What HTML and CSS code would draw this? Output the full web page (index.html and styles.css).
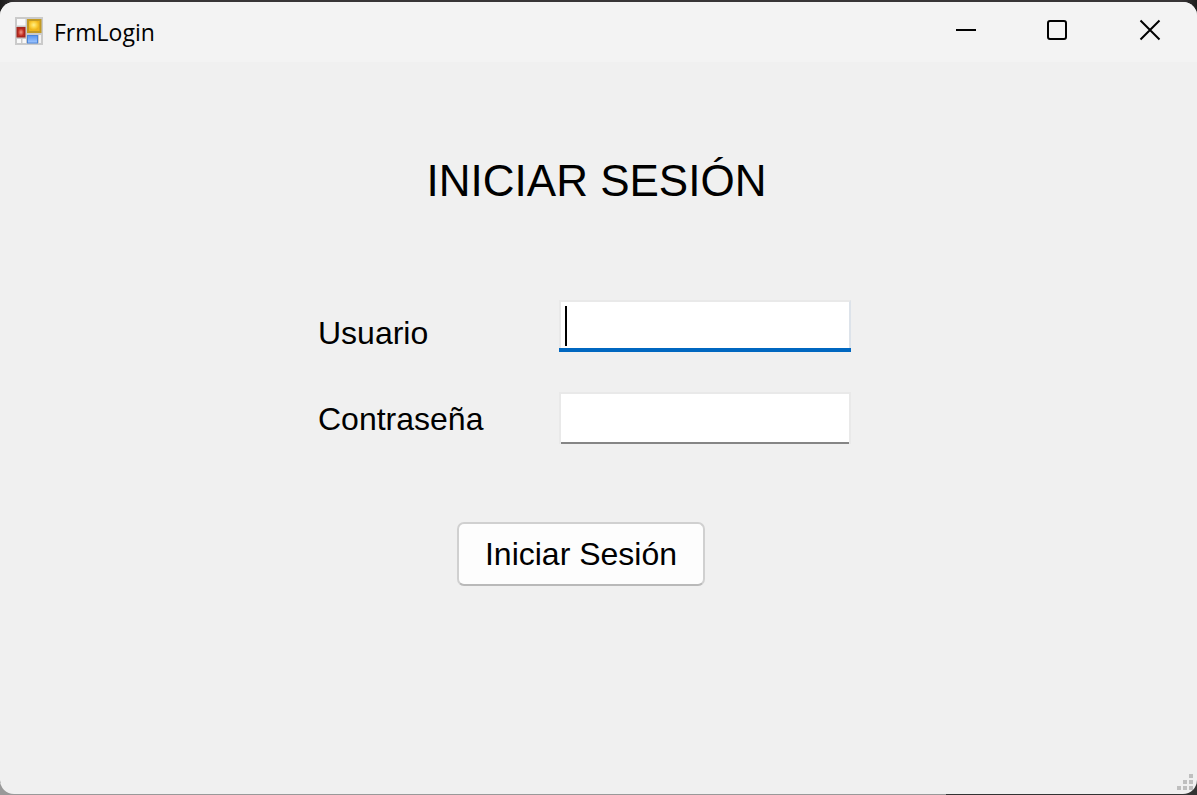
FILE: index.html
```html
<!DOCTYPE html>
<html lang="es">
<head>
<meta charset="utf-8">
<meta name="viewport" content="width=device-width, initial-scale=1">
<title>FrmLogin</title>
<link rel="stylesheet" href="styles.css">
</head>
<body>
<div class="window">
  <header class="titlebar">
    <svg class="app-icon" viewBox="0 0 28 28" aria-hidden="true">
      <defs>
        <radialGradient id="gold" cx=".45" cy=".4"><stop offset="0" stop-color="#fff08a"/><stop offset=".6" stop-color="#fbd03c"/><stop offset="1" stop-color="#efb51c"/></radialGradient>
        <radialGradient id="red"><stop offset="0" stop-color="#f29a8a"/><stop offset="1" stop-color="#c02a1e"/></radialGradient>
        <linearGradient id="blue" x2="0" y2="1"><stop offset="0" stop-color="#5b96ee"/><stop offset="1" stop-color="#9cc4ff"/></linearGradient>
      </defs>
      <rect width="28" height="28" fill="#cacaca"/>
      <rect x="2" y="2" width="8.500" height="6.500" fill="#fafafa"/>
      <rect x="2" y="22" width="4" height="4" fill="#f8f8f8"/>
      <rect x="7.500" y="22" width="3.500" height="4" fill="#f8f8f8"/>
      <rect x="24" y="18" width="2" height="8" fill="#f2f2f2"/>
      <rect x="12" y="2" width="14.500" height="14" fill="#c29a24"/>
      <rect x="14" y="4" width="10.500" height="10" fill="url(#gold)"/>
      <rect x="1.500" y="10" width="9" height="10.500" fill="#a5261f"/>
      <rect x="3" y="11.500" width="6" height="7.500" fill="url(#red)"/>
      <rect x="12" y="18" width="11" height="8.500" fill="#4a84d8"/>
      <rect x="13" y="19" width="9" height="6.500" fill="url(#blue)"/>
    </svg>
    <span class="caption">FrmLogin</span>
    <button class="control" type="button" aria-label="Minimizar">
      <svg class="control-icon" viewBox="0 0 22 22"><path d="M1 11H21"/></svg>
    </button>
    <button class="control" type="button" aria-label="Maximizar">
      <svg class="control-icon" viewBox="0 0 22 22"><rect x="1" y="2" width="18" height="18" rx="2"/></svg>
    </button>
    <button class="control" type="button" aria-label="Cerrar">
      <svg class="control-icon" viewBox="0 0 22 22"><path d="M1.500 1.500L20.500 20.500M20.500 1.500L1.500 20.500"/></svg>
    </button>
  </header>
  <main class="content">
    <h1 class="heading">INICIAR SESIÓN</h1>
    <form class="login">
      <label class="label" for="user">Usuario</label>
      <div class="field">
        <input class="input input-active" id="user" name="user" type="text" autocomplete="off">
        <span class="caret"></span>
      </div>
      <label class="label" for="password">Contraseña</label>
      <div class="field">
        <input class="input" id="password" name="password" type="password">
      </div>
      <button class="submit" type="button">Iniciar Sesión</button>
    </form>
  </main>
  <svg class="grip" viewBox="0 0 16 16" aria-hidden="true">
    <path fill="#bfbfbf" d="M12 0h4v4h-4zM6 6h4v4H6zM12 6h4v4h-4zM0 12h4v4H0zM6 12h4v4H6zM12 12h4v4h-4z"/>
  </svg>
</div>
</body>
</html>
```
FILE: styles.css
```css
* {
  box-sizing: border-box;
}

body {
  margin: 0;
  padding: 2px 0 1px;
  min-height: 100vh;
  display: flex;
  background:
    linear-gradient(90deg, #999 0 79%, #333 79%) bottom / 100% 12px no-repeat,
    linear-gradient(90deg, #1c1c1c 0, #383536 16px, #383536 calc(100% - 16px), #1c1c1c 100%);
  font-family: "Liberation Sans", Arial, sans-serif;
  color: #000;
}

.window {
  position: relative;
  flex: 1;
  display: flex;
  flex-direction: column;
  background: #f0f0f0;
  border-radius: 14px;
  overflow: hidden;
}

.titlebar {
  display: flex;
  align-items: center;
  height: 60px;
  padding: 0 1px 4px 15px;
  background: #f3f3f3;
}

.app-icon {
  width: 28px;
  height: 28px;
  margin-top: 2px;
}

.caption {
  flex: 1;
  margin-left: 11px;
  padding-top: 4px;
  font-family: "Open Sans", "Noto Sans", sans-serif;
  font-size: 23px;
  line-height: 32px;
}

.control {
  display: flex;
  align-items: center;
  justify-content: center;
  width: 92px;
  height: 56px;
  padding: 0;
  border: 0;
  background: transparent;
}

.control-icon {
  width: 22px;
  height: 22px;
  fill: none;
  stroke: #000;
  stroke-width: 2;
}

.content {
  flex: 1;
  display: flex;
  flex-direction: column;
  align-items: center;
  padding-top: 93px;
}

.heading {
  margin: 0 4px 0 0;
  font-size: 44px;
  font-weight: 400;
  line-height: 52px;
}

.login {
  display: grid;
  grid-template-columns: 241px 292px;
  row-gap: 40px;
  margin: 93px 28px 0 0;
  font-size: 32px;
  line-height: 36px;
}

.label {
  align-self: center;
  padding-top: 14px;
}

.label ~ .label {
  padding-top: 2px;
}

.field {
  position: relative;
}

.input {
  display: block;
  width: 100%;
  height: 52px;
  padding: 0 6px;
  border: 2px solid #e9e9e9;
  border-bottom: 0;
  outline: 0;
  background: #fff;
  box-shadow: inset 0 -2px #858585;
  font: inherit;
}

.input-active {
  border-right-color: #dde3ea;
}

.field:has(.input-active) {
  border-bottom: 4px solid #0067c0;
}

.input-active {
  height: 48px;
  box-shadow: none;
}

.caret {
  position: absolute;
  top: 6px;
  left: 6px;
  width: 2px;
  height: 40px;
  background: #000;
}

.submit {
  grid-column: 1 / -1;
  justify-self: center;
  margin: 38px 7px 0 0;
  width: 248px;
  height: 64px;
  padding: 0;
  border: 2px solid #d0d0d0;
  border-bottom-color: #b9b9b9;
  border-radius: 7px;
  background: #fdfdfd;
  color: #000;
  font-family: inherit;
  font-size: 32px;
}

.grip {
  position: absolute;
  right: 4px;
  bottom: 4px;
  width: 16px;
  height: 16px;
}
```
